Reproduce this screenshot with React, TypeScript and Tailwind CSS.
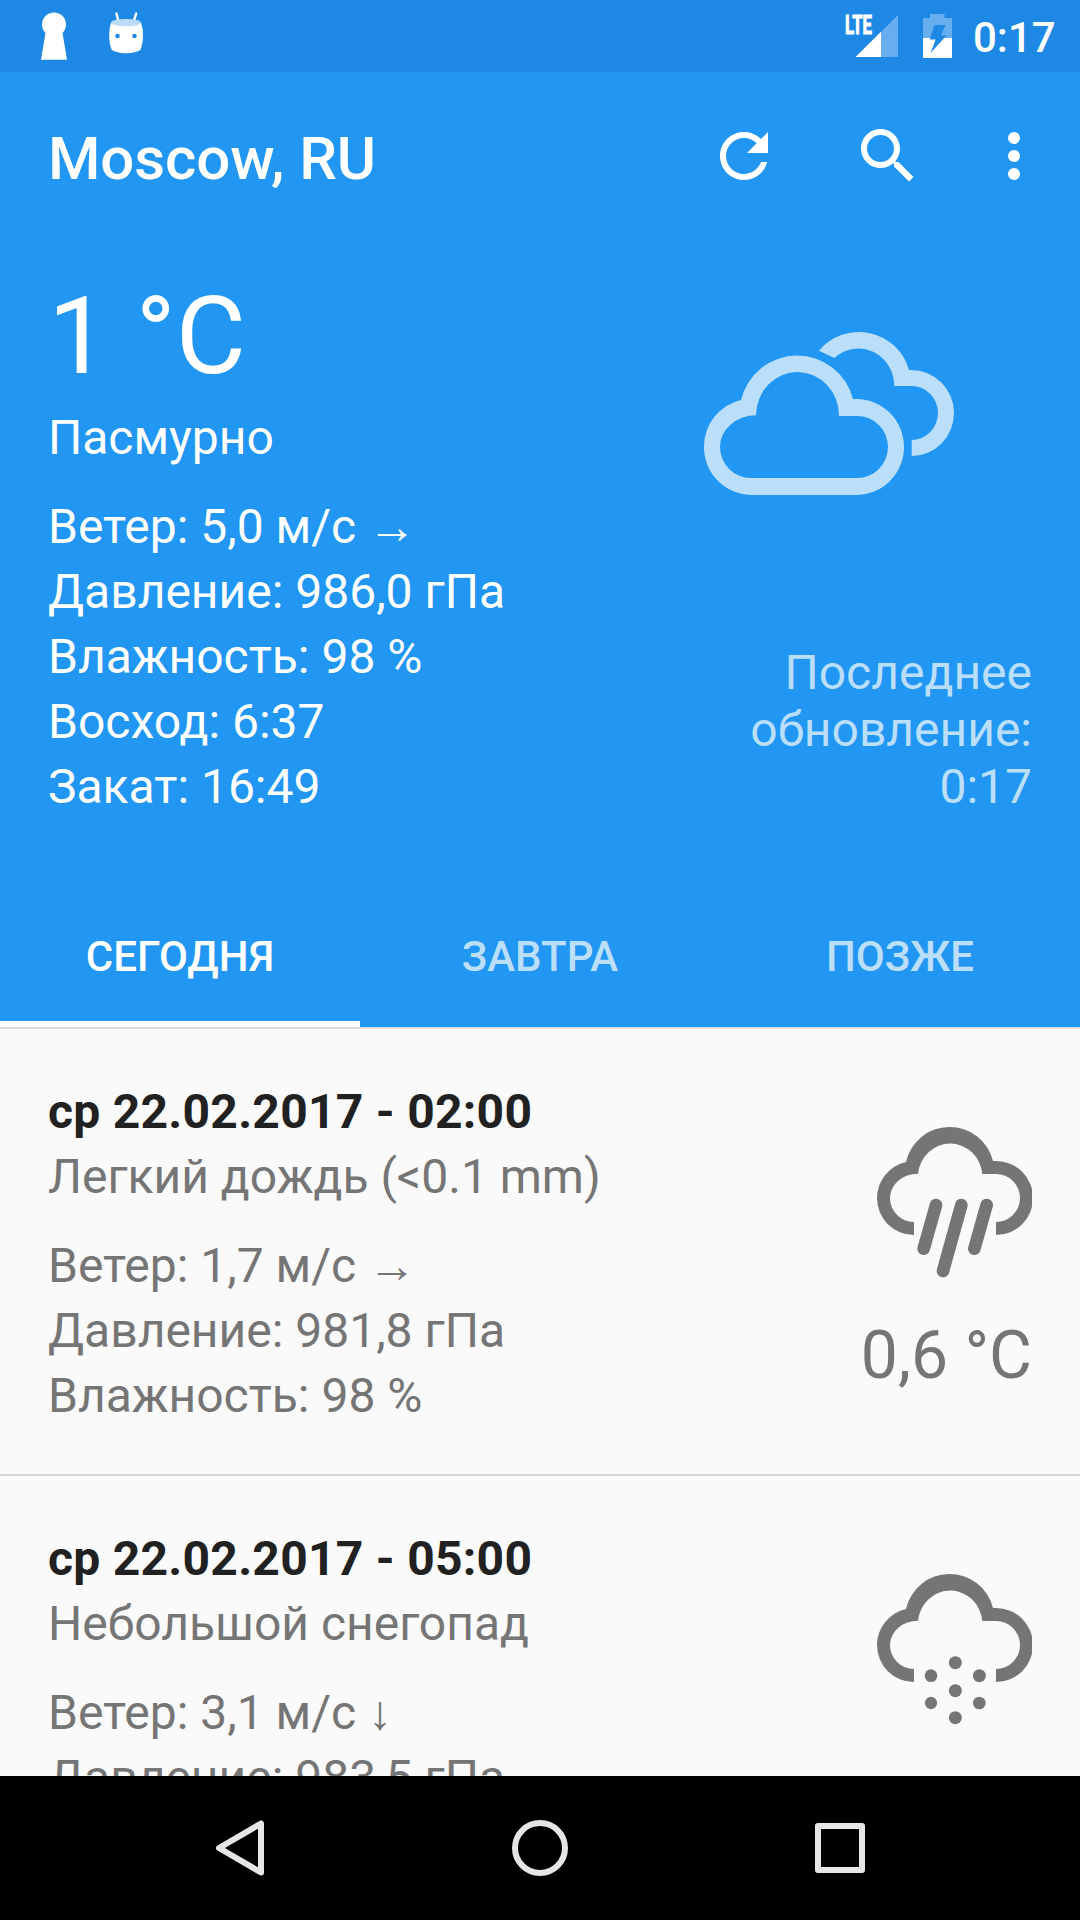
import React, { useState } from 'react';

type Forecast = {
  date: string;
  description: string;
  wind: string;
  arrow: string;
  pressure: string;
  humidity?: string;
  temperature?: string;
  icon: 'rain' | 'snow';
};

const tabs = ['Сегодня', 'Завтра', 'Позже'];

const forecasts: Forecast[] = [
  {
    date: 'ср 22.02.2017 - 02:00',
    description: 'Легкий дождь (<0.1 mm)',
    wind: '1,7 м/с',
    arrow: '→',
    pressure: '981,8 гПа',
    humidity: '98 %',
    temperature: '0,6 °C',
    icon: 'rain',
  },
  {
    date: 'ср 22.02.2017 - 05:00',
    description: 'Небольшой снегопад',
    wind: '3,1 м/с',
    arrow: '↓',
    pressure: '983,5 гПа',
    icon: 'snow',
  },
];

const StatusBar = () => (
  <div className="flex h-[72px] items-center justify-between bg-[#1e88e5] pl-[41px] pr-[24px]">
    <div className="flex items-center gap-[40px]">
      {/* keyhole */}
      <svg className="h-[72px] w-[26px]" viewBox="41 0 26 72" fill="#fff">
        <circle cx="54" cy="24.5" r="12" />
        <path d="M46 30h16l5 29.7H41z" />
      </svg>
      {/* marshmallow */}
      <svg className="h-[72px] w-[38px]" viewBox="107 0 38 72">
        <path d="M116.4 13.6l2.2 8M136.2 13.6l-2.6 8" stroke="#fff" strokeWidth="2.4" strokeLinecap="round" />
        <path d="M111 23c-2.6 8-2.4 19 .6 26.5c6 5 23 5 29 0c3-7.5 3.2-18.5.6-26.5z" fill="#fff" />
        <ellipse cx="126" cy="22.6" rx="15" ry="3.6" fill="#bbdcf8" />
        <circle cx="117.5" cy="36" r="2.3" fill="#1e88e5" />
        <circle cx="134.5" cy="36" r="2.3" fill="#1e88e5" />
      </svg>
    </div>
    <div className="flex items-center">
      <svg className="h-[72px] w-[56px]" viewBox="843 0 56 72" fill="#fff">
        <text x="845" y="33.5" fontFamily="Roboto, sans-serif" fontWeight="700" fontSize="26" textLength="27" lengthAdjust="spacingAndGlyphs" stroke="#fff" strokeWidth="1">LTE</text>
        <path d="M898 15v42h-17V32z" fillOpacity=".32" />
        <path d="M855.5 57L881 31.7V57z" />
      </svg>
      <svg className="ml-[24px] h-[72px] w-[29px]" viewBox="923 0 29 72" fill="#fff">
        <path d="M923 38V18h7v-4h14.5v4h7.5v20z" fillOpacity=".32" />
        <path d="M923 38h29v20h-29z" />
        <path d="M934.5 25h11l-4.5 10.5h5.5l-16 17.5 5.2-13.5h-6z" fill="#1e88e5" />
      </svg>
      <span className="ml-[21px] w-[83px] pt-[4px] text-[42px] font-medium leading-[68px]">0:17</span>
    </div>
  </div>
);

const Toolbar = () => (
  <div className="flex h-[168px] items-center justify-between pl-[48px] pr-[30px]">
    <h1 className="pt-[5px] text-[60px] font-medium leading-[70px] tracking-[-0.1px]">Moscow, RU</h1>
    <div className="flex items-center">
      <button aria-label="refresh">
        <svg className="size-[72px]" viewBox="0 0 24 24" fill="#fff">
          <path d="M17.65 6.35C16.2 4.9 14.21 4 12 4c-4.42 0-7.99 3.58-7.99 8s3.57 8 7.99 8c3.73 0 6.84-2.55 7.73-6h-2.08c-.82 2.33-3.04 4-5.65 4-3.31 0-6-2.69-6-6s2.69-6 6-6c1.66 0 3.14.69 4.22 1.78L13 11h7V4l-2.35 2.35z" />
        </svg>
      </button>
      <button aria-label="search" className="ml-[72px]">
        <svg className="size-[72px]" viewBox="0 0 24 24" fill="#fff">
          <path d="M15.5 14h-.79l-.28-.27C15.41 12.59 16 11.11 16 9.5 16 5.91 13.09 3 9.5 3S3 5.91 3 9.5 5.91 16 9.5 16c1.61 0 3.09-.59 4.23-1.57l.27.28v.79l5 4.99L20.49 19l-4.99-5zm-6 0C7.01 14 5 11.99 5 9.5S7.01 5 9.5 5 14 7.01 14 9.5 11.99 14 9.5 14z" />
        </svg>
      </button>
      <button aria-label="more" className="ml-[54px]">
        <svg className="size-[72px]" viewBox="0 0 24 24" fill="#fff">
          <circle cx="12" cy="6" r="2" />
          <circle cx="12" cy="12" r="2" />
          <circle cx="12" cy="18" r="2" />
        </svg>
      </button>
    </div>
  </div>
);

const CloudyIcon = () => (
  <svg className="h-[200px] w-[300px]" viewBox="0 0 900 600" fill="#bbdffb">
    <path
      fillRule="evenodd"
      d="M215 555A143 143.5 0 0 1 72 412A143 143.5 0 0 1 183 270A173 173 0 0 1 519 267H529A143 144 0 0 1 529 555ZM213 504H531A93 93 0 0 0 531 318H477A124.5 131 0 0 0 228 316A108 94 0 0 0 120 411A93 93 0 0 0 213 504Z"
    />
    <path d="M417 122A156 156 0 0 1 687 180H693A129 129 0 0 1 822 309A127 129 0 0 1 695 438V390A79 81 0 0 0 774 309A79 81 0 0 0 695 228H643A108 112 0 0 0 463 144Z" />
  </svg>
);

const ForecastIcon = ({ type }: { type: Forecast['icon'] }) => (
  <svg className="size-[160px]" viewBox="96 72 480 480" fill="#757575">
    <path d="M222 405A111 111 0 0 1 111 294A111 111 0 0 1 198 186A134 134 0 0 1 459 183H468A111 111 0 0 1 468 405V366A72 72 0 0 0 468 222H427A97 101 0 0 0 234 221A84 73 0 0 0 150 294A72 72 0 0 0 222 366Z" />
    {type === 'rain' ? (
      <path d="M288 315L251 446M364 315L309 513M440 315L403 446" stroke="#757575" strokeWidth="38" strokeLinecap="round" />
    ) : (
      <>
        <circle cx="346" cy="347" r="19.5" />
        <circle cx="273" cy="386" r="19" />
        <circle cx="418" cy="386" r="19.5" />
        <circle cx="346" cy="431" r="19.5" />
        <circle cx="273" cy="468" r="18.5" />
        <circle cx="418" cy="468" r="19" />
        <circle cx="346" cy="512" r="19.5" />
      </>
    )}
  </svg>
);

// Roboto has no arrows, so they need their own font
const Arrow = ({ children }: { children: React.ReactNode }) => (
  <span className="font-['Liberation_Sans',sans-serif]">{children}</span>
);

const ForecastRow = ({ item }: { item: Forecast }) => (
  <div className="flex h-[447px] shrink-0 justify-between border-b-2 border-[#d6d6d6] px-[48px] pt-[50px] text-[48px] leading-[65px] text-[#757575]">
    <div>
      <p className="font-bold tracking-[0.27px] text-[#212121]">{item.date}</p>
      <p>{item.description}</p>
      <p className="mt-[24px]">Ветер: {item.wind} <Arrow>{item.arrow}</Arrow></p>
      <p>Давление: {item.pressure}</p>
      {item.humidity && <p>Влажность: {item.humidity}</p>}
    </div>
    <div className="flex flex-col items-end pt-[45px]">
      <ForecastIcon type={item.icon} />
      {item.temperature && <p className="mt-[33px] text-[66px] leading-[78px]">{item.temperature}</p>}
    </div>
  </div>
);

const NavBar = () => (
  <div className="flex h-[144px] shrink-0 items-center justify-around bg-black px-[90px]">
    <svg className="size-[72px]" viewBox="204 1812 72 72" fill="none" stroke="#e6e6e6" strokeWidth="6" strokeLinejoin="round">
      <path d="M261 1823.5V1872.5L219 1848Z" />
    </svg>
    <svg className="size-[72px]" viewBox="504 1812 72 72" fill="none" stroke="#e6e6e6" strokeWidth="6">
      <circle cx="540" cy="1848" r="25" />
    </svg>
    <svg className="size-[72px]" viewBox="804 1812 72 72" fill="none" stroke="#e6e6e6" strokeWidth="6" strokeLinejoin="round">
      <rect x="818" y="1826" width="44" height="44" />
    </svg>
  </div>
);

const App = () => {
  const [active, setActive] = useState(0);

  return (
    <div className="flex h-[1920px] w-[1080px] flex-col overflow-hidden bg-[#fafafa] font-[Roboto,sans-serif]">
      <header className="shrink-0 bg-[#2196f3] text-white">
        <StatusBar />
        <Toolbar />

        <section className="flex h-[643px] justify-between px-[48px] pt-[31px] text-[48px] leading-[65px]">
          <div>
            <p className="text-[108px] leading-[130px]">1 °C</p>
            <p className="mt-[4px]">Пасмурно</p>
            <p className="mt-[24px]">Ветер: 5,0 м/с <Arrow>→</Arrow></p>
            <p>Давление: 986,0 гПа</p>
            <p>Влажность: 98 %</p>
            <p>Восход: 6:37</p>
            <p>Закат: 16:49</p>
          </div>
          <div className="flex w-[352px] flex-col pt-[39px]">
            <CloudyIcon />
            <p className="mt-[134px] text-right leading-[57px] text-[#bbdffb]">
              Последнее<br />обновление:<br />0:17
            </p>
          </div>
        </section>

        <nav className="grid h-[144px] grid-cols-3">
          {tabs.map((tab, i) => (
            <button
              key={tab}
              onClick={() => setActive(i)}
              className={
                i === active
                  ? 'border-b-[6px] border-white pt-[8px] text-[42px] font-medium uppercase text-white'
                  : 'border-b-[6px] border-transparent pt-[8px] text-[42px] font-medium uppercase text-[#bbdffb]'
              }
            >
              {tab}
            </button>
          ))}
        </nav>
      </header>

      <main className="flex min-h-0 flex-1 flex-col overflow-hidden border-t-2 border-[#dcdcdc]">
        {forecasts.map((item) => (
          <ForecastRow key={item.date} item={item} />
        ))}
      </main>

      <NavBar />
    </div>
  );
};

export default App;
